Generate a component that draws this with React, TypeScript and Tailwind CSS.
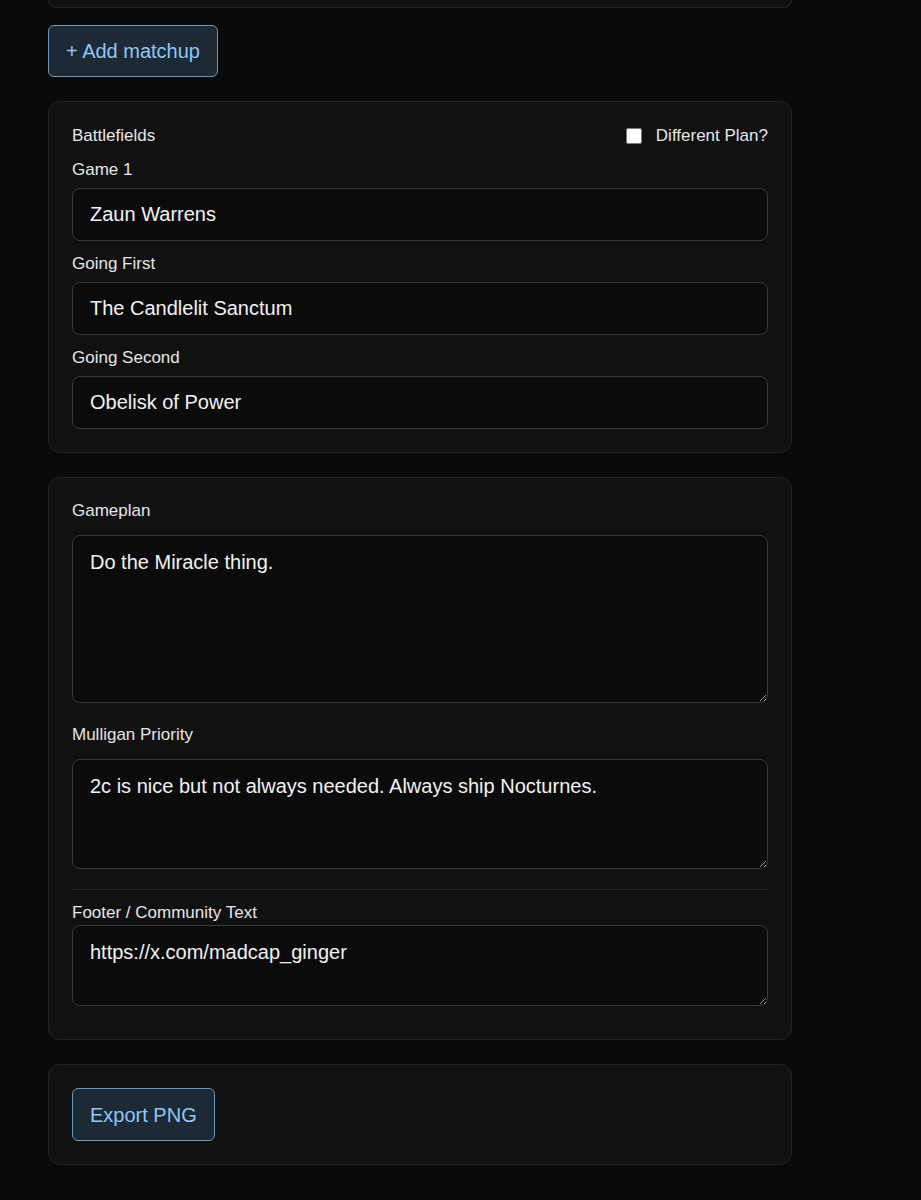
import React, { useState } from 'react';

const font = { fontFamily: '"Liberation Sans", Arial, sans-serif' };

function Field({ label, value }: { label: string; value: string }) {
  return (
    <div className="flex flex-col">
      <label className="text-[17px] leading-5 text-[#e6e6e6] mb-2">{label}</label>
      <input
        defaultValue={value}
        className="h-[53px] w-full rounded-lg border border-[#3a3a3a] bg-[#0b0b0b] px-[17px] text-[20px] text-[#f2f2f2] outline-none"
      />
    </div>
  );
}

function Area({ label, value, h, mb }: { label: string; value: string; h: string; mb: string }) {
  return (
    <div className="flex flex-col">
      <label className={`text-[17px] leading-5 text-[#e6e6e6] ${mb}`}>{label}</label>
      <textarea
        defaultValue={value}
        className={`${h} block w-full rounded-lg border border-[#3a3a3a] bg-[#0b0b0b] px-[17px] py-[14px] text-[20px] leading-6 text-[#f2f2f2] outline-none`}
      />
    </div>
  );
}

export default function App() {
  const [diff, setDiff] = useState(false);

  return (
    <div className="min-h-[1200px] bg-[#0a0a0a] px-12" style={font}>
      <div className="w-[744px]">
        {/* previous card, scrolled off */}
        <div className="h-[8px] rounded-b-xl border-x border-b border-[#222] bg-[#111]" />

        <button className="mt-[17px] h-[52px] rounded-md border border-[#6b98bb] bg-[#1d2934] px-[17px] text-[20px] text-[#8ec8f5]">
          + Add matchup
        </button>

        <div className="mt-6 rounded-xl border border-[#222] bg-[#111] px-[23px] pt-[23px] pb-[23px]">
          <div className="flex items-center justify-between h-[22px]">
            <span className="text-[17px] leading-5 text-[#e6e6e6]">Battlefields</span>
            <label className="flex items-center gap-[14px] text-[17px] text-[#e6e6e6]">
              <input
                type="checkbox"
                checked={diff}
                onChange={(e) => setDiff(e.target.checked)}
                className="h-4 w-4"
              />
              Different Plan?
            </label>
          </div>
          <div className="mt-[13px] flex flex-col gap-[13px]">
            <Field label="Game 1" value="Zaun Warrens" />
            <Field label="Going First" value="The Candlelit Sanctum" />
            <Field label="Going Second" value="Obelisk of Power" />
          </div>
        </div>

        <div className="mt-6 rounded-xl border border-[#222] bg-[#111] px-[23px] pt-[23px] pb-[33px]">
          <Area label="Gameplan" value="Do the Miracle thing." h="h-[168px]" mb="mb-[14px]" />
          <div className="mt-[22px]">
            <Area
              label="Mulligan Priority"
              value="2c is nice but not always needed. Always ship Nocturnes."
              h="h-[110px]"
              mb="mb-[14px]"
            />
          </div>
          <div className="mt-5 mb-[13px] h-px bg-[#262626]" />
          <Area label="Footer / Community Text" value="https://x.com/madcap_ginger" h="h-[81px]" mb="mb-[2px]" />
        </div>

        <div className="mt-6 rounded-xl border border-[#222] bg-[#111] p-[23px]">
          <button className="h-[53px] rounded-md border border-[#6b98bb] bg-[#1d2934] px-[17px] text-[20px] text-[#8ec8f5]">
            Export PNG
          </button>
        </div>
      </div>
    </div>
  );
}
